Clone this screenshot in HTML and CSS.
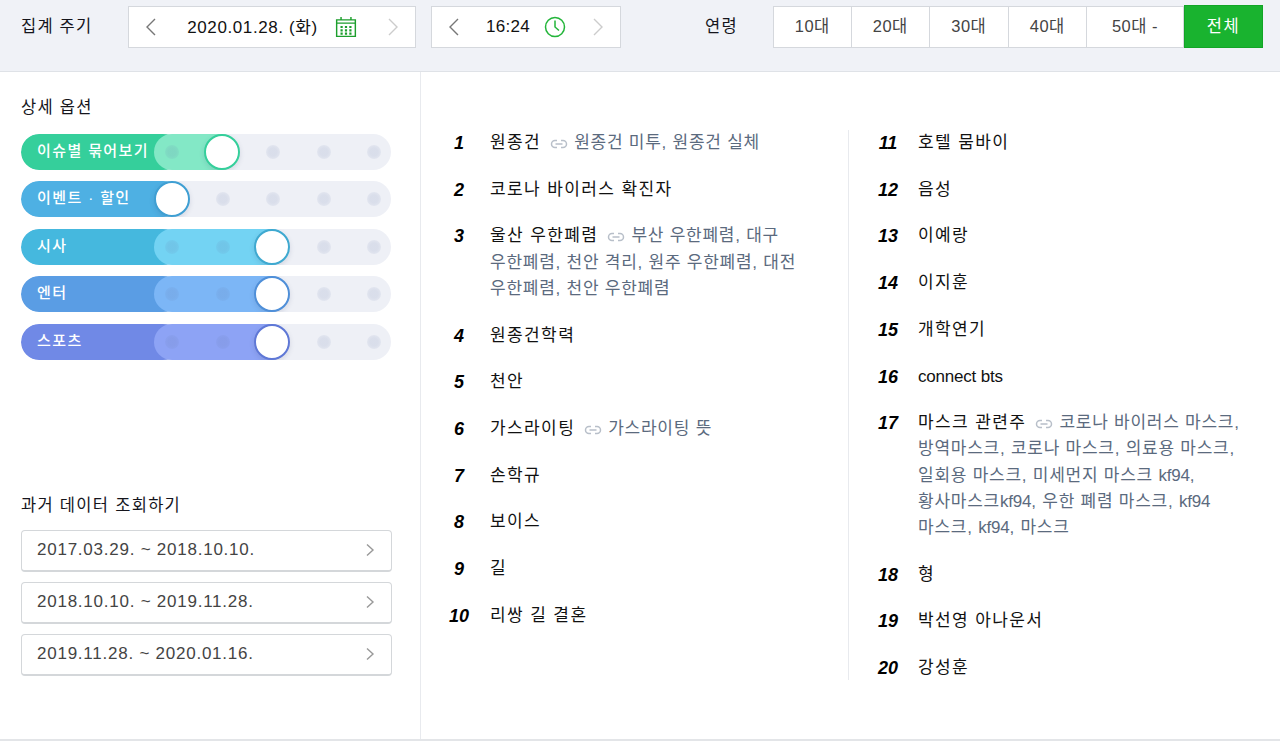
FILE: index.html
```html
<!DOCTYPE html>
<html lang="ko">
<head>
  <meta charset="UTF-8" />
  <meta name="viewport" content="width=device-width, initial-scale=1.0" />
  <title>급상승 검색어</title>
  <link rel="stylesheet" href="styles.css">
</head>
<body>
  <header class="topbar">
    <span class="top-label">집계 주기</span>
    <div class="stepper stepper-date">
      <svg class="arrow" viewBox="0 0 12 20"><path d="M10 2 2 10l8 8"/></svg>
      <div class="stepper-value">
        <span>2020.01.28. (화)</span>
        <svg class="pick-icon" viewBox="0 0 20 20">
          <path class="cal-line" d="M1.500 3.500h17v15h-17zM1.500 6.500h17M5.500 1v3M14.500 1v3"/>
          <path class="cal-dots" d="M5 9h2v2H5zM9 9h2v2H9zM13 9h2v2h-2zM5 12h2v2H5zM9 12h2v2H9zM13 12h2v2h-2zM5 15h2v2H5zM9 15h2v2H9zM13 15h2v2h-2z"/>
        </svg>
      </div>
      <svg class="arrow arrow-off" viewBox="0 0 12 20"><path d="M2 2l8 8-8 8"/></svg>
    </div>
    <div class="stepper stepper-time">
      <svg class="arrow" viewBox="0 0 12 20"><path d="M10 2 2 10l8 8"/></svg>
      <div class="stepper-value">
        <span>16:24</span>
        <svg class="pick-icon" viewBox="0 0 22 22">
          <circle class="clock-line" cx="11" cy="11" r="9.500"/>
          <path class="clock-line" d="M11 4.500V11l4 3.500"/>
        </svg>
      </div>
      <svg class="arrow arrow-off" viewBox="0 0 12 20"><path d="M2 2l8 8-8 8"/></svg>
    </div>
    <span class="top-label age-label">연령</span>
    <div class="age-tabs">
      <a class="age-tab">10대</a>
      <a class="age-tab">20대</a>
      <a class="age-tab">30대</a>
      <a class="age-tab">40대</a>
      <a class="age-tab age-wide">50대 -</a>
      <a class="age-tab age-on">전체</a>
    </div>
  </header>

  <div class="content">
    <aside class="side">
      <h3 class="side-title">상세 옵션</h3>
      <div class="toggles">
        <div class="toggle t-green level-1">
          <div class="fill"></div><div class="fill-light"></div>
          <div class="dots"><i></i><i></i><i></i><i></i><i></i></div>
          <span class="toggle-name">이슈별 묶어보기</span>
          <div class="thumb"></div>
        </div>
        <div class="toggle t-sky level-0">
          <div class="fill"></div>
          <div class="dots"><i></i><i></i><i></i><i></i><i></i></div>
          <span class="toggle-name">이벤트 · 할인</span>
          <div class="thumb"></div>
        </div>
        <div class="toggle t-cyan level-2">
          <div class="fill"></div><div class="fill-light"></div>
          <div class="dots"><i></i><i></i><i></i><i></i><i></i></div>
          <span class="toggle-name">시사</span>
          <div class="thumb"></div>
        </div>
        <div class="toggle t-blue level-2">
          <div class="fill"></div><div class="fill-light"></div>
          <div class="dots"><i></i><i></i><i></i><i></i><i></i></div>
          <span class="toggle-name">엔터</span>
          <div class="thumb"></div>
        </div>
        <div class="toggle t-violet level-2">
          <div class="fill"></div><div class="fill-light"></div>
          <div class="dots"><i></i><i></i><i></i><i></i><i></i></div>
          <span class="toggle-name">스포츠</span>
          <div class="thumb"></div>
        </div>
      </div>

      <h3 class="side-title past-title">과거 데이터 조회하기</h3>
      <div class="past-list">
        <a class="past-item">2017.03.29. ~ 2018.10.10.<svg class="arrow-small" viewBox="0 0 10 14"><path d="M2 1.500 8 7l-6 5.500"/></svg></a>
        <a class="past-item">2018.10.10. ~ 2019.11.28.<svg class="arrow-small" viewBox="0 0 10 14"><path d="M2 1.500 8 7l-6 5.500"/></svg></a>
        <a class="past-item">2019.11.28. ~ 2020.01.16.<svg class="arrow-small" viewBox="0 0 10 14"><path d="M2 1.500 8 7l-6 5.500"/></svg></a>
      </div>
    </aside>

    <main class="ranks">
      <ol class="rank-col rank-left">
        <li><b class="num">1</b><p><span class="word">원종건</span><svg class="link" viewBox="0 0 18 10"><path d="M7 1.500H5a3.500 3.500 0 0 0 0 7h2M11 1.500h2a3.500 3.500 0 0 1 0 7h-2M5.500 5h7"/></svg><span class="rel">원종건 미투, 원종건 실체</span></p></li>
        <li><b class="num">2</b><p><span class="word">코로나 바이러스 확진자</span></p></li>
        <li><b class="num">3</b><p><span class="word">울산 우한폐렴</span><svg class="link" viewBox="0 0 18 10"><path d="M7 1.500H5a3.500 3.500 0 0 0 0 7h2M11 1.500h2a3.500 3.500 0 0 1 0 7h-2M5.500 5h7"/></svg><span class="rel">부산 우한폐렴, 대구 우한폐렴, 천안 격리, 원주 우한폐렴, 대전 우한폐렴, 천안 우한폐렴</span></p></li>
        <li><b class="num">4</b><p><span class="word">원종건학력</span></p></li>
        <li><b class="num">5</b><p><span class="word">천안</span></p></li>
        <li><b class="num">6</b><p><span class="word">가스라이팅</span><svg class="link" viewBox="0 0 18 10"><path d="M7 1.500H5a3.500 3.500 0 0 0 0 7h2M11 1.500h2a3.500 3.500 0 0 1 0 7h-2M5.500 5h7"/></svg><span class="rel">가스라이팅 뜻</span></p></li>
        <li><b class="num">7</b><p><span class="word">손학규</span></p></li>
        <li><b class="num">8</b><p><span class="word">보이스</span></p></li>
        <li><b class="num">9</b><p><span class="word">길</span></p></li>
        <li><b class="num">10</b><p><span class="word">리쌍 길 결혼</span></p></li>
      </ol>
      <ol class="rank-col rank-right">
        <li><b class="num">11</b><p><span class="word">호텔 뭄바이</span></p></li>
        <li><b class="num">12</b><p><span class="word">음성</span></p></li>
        <li><b class="num">13</b><p><span class="word">이예랑</span></p></li>
        <li><b class="num">14</b><p><span class="word">이지훈</span></p></li>
        <li><b class="num">15</b><p><span class="word">개학연기</span></p></li>
        <li><b class="num">16</b><p><span class="word latin">connect bts</span></p></li>
        <li><b class="num">17</b><p><span class="word">마스크 관련주</span><svg class="link" viewBox="0 0 18 10"><path d="M7 1.500H5a3.500 3.500 0 0 0 0 7h2M11 1.500h2a3.500 3.500 0 0 1 0 7h-2M5.500 5h7"/></svg><span class="rel">코로나 바이러스 마스크, 방역마스크, 코로나 마스크, 의료용 마스크, 일회용 마스크, 미세먼지 마스크 <span class="latin">kf94</span>, 황사마스크<span class="latin">kf94</span>, 우한 폐렴 마스크, <span class="latin">kf94</span> 마스크, <span class="latin">kf94</span>, 마스크</span></p></li>
        <li><b class="num">18</b><p><span class="word">형</span></p></li>
        <li><b class="num">19</b><p><span class="word">박선영 아나운서</span></p></li>
        <li><b class="num">20</b><p><span class="word">강성훈</span></p></li>
      </ol>
    </main>
  </div>
</body>
</html>
```

FILE: styles.css
```css
* { box-sizing: border-box; margin: 0; padding: 0; }

body {
  font-family: "Liberation Sans", "Noto Sans CJK KR", sans-serif;
  font-size: 17px;
  color: #111;
  height: 741px;
  overflow: hidden;
  background: #fff;
  display: flex;
  flex-direction: column;
}

/* top bar */
.topbar {
  height: 72px;
  flex: none;
  display: flex;
  align-items: flex-start;
  padding: 6px 0 0 21px;
  background: #f0f2f7;
  border-bottom: 1px solid #dfe2e7;
}

.top-label {
  width: 107px;
  line-height: 40px;
  font-size: 16.500px;
  letter-spacing: 1.200px;
  color: #15151c;
}

.age-label {
  width: 68px;
  margin-left: 84px;
}

.stepper {
  height: 42px;
  display: flex;
  align-items: center;
  justify-content: space-between;
  padding: 0 16px;
  background: #fff;
  border: 1px solid #d5d8dd;
}

.stepper-date { width: 288px; margin-right: 15px; }
.stepper-time { width: 190px; }

.stepper-value {
  display: flex;
  align-items: center;
  gap: 17px;
}

.stepper-date .stepper-value span { letter-spacing: 0.600px; margin-bottom: 4px; }
.stepper-time .stepper-value { gap: 14px; }
.stepper-time .stepper-value span { letter-spacing: 0.300px; }

.arrow {
  width: 12px;
  height: 20px;
  fill: none;
  stroke: #777;
  stroke-width: 1.400;
}

.arrow-off { stroke: #ccc; }

.pick-icon { width: 22px; height: 22px; }

.cal-line { fill: none; stroke: #1c9e2c; stroke-width: 1.300; }
.cal-dots { fill: #1c9e2c; }
.clock-line { fill: none; stroke: #23b53a; stroke-width: 1.500; }

.age-tabs {
  display: flex;
  height: 42px;
}

.age-tab {
  width: 78.500px;
  display: flex;
  align-items: center;
  justify-content: center;
  padding-bottom: 4px;
  background: #fff;
  color: #444;
  font-size: 16.500px;
  letter-spacing: 0.500px;
  border: 1px solid #d5d8dd;
  border-left: 0;
}

.age-tab:first-child { border-left: 1px solid #d5d8dd; }
.age-wide { width: 97px; }

.age-on {
  width: 79px;
  margin-top: -1px;
  height: 43px;
  background: #19b32f;
  border: 1px solid #12a526;
  color: #fff;
  letter-spacing: 1.500px;
}

/* page body */
.content {
  flex: 1;
  display: flex;
  border-bottom: 2px solid #e3e5e8;
}

.side {
  width: 421px;
  flex: none;
  padding: 23px 28px 0 21px;
  border-right: 1px solid #e8eaee;
}

.side-title {
  font-size: 16.500px;
  font-weight: 400;
  line-height: 24px;
  letter-spacing: 1.300px;
  color: #15151c;
}

.toggles {
  margin-top: 15px;
  display: flex;
  flex-direction: column;
  gap: 11.400px;
}

.toggle {
  position: relative;
  height: 36px;
  width: 370px;
  border-radius: 18px;
  background: #eef0f6;
  overflow: hidden;
}

.fill, .fill-light, .dots, .thumb, .toggle-name { position: absolute; }

.fill {
  left: 0;
  top: 0;
  bottom: 0;
  width: 160px;
  border-radius: 18px;
}

.fill-light {
  left: 133px;
  top: 0;
  bottom: 0;
  border-radius: 18px;
}

.level-1 .fill-light { width: 85px; }
.level-2 .fill-light { width: 135px; }

.thumb {
  top: 0;
  width: 36px;
  height: 36px;
  border-radius: 50%;
  background: #fff;
  border: 2px solid #3aa;
  box-shadow: 0 2px 5px rgba(60, 70, 110, 0.15);
}

.level-0 .thumb { left: 133px; }
.level-1 .thumb { left: 183px; }
.level-2 .thumb { left: 233px; }

.dots {
  left: 144px;
  top: 11px;
  width: 216px;
  display: flex;
  justify-content: space-between;
}

.dots i {
  width: 14px;
  height: 14px;
  border-radius: 50%;
  background: radial-gradient(circle, rgba(100, 120, 170, 0.15) 40%, rgba(100, 120, 170, 0.03) 100%);
}

.toggle-name {
  left: 16px;
  top: 0;
  line-height: 33px;
  color: #fff;
  font-size: 15px;
  letter-spacing: 1.400px;
  font-weight: 500;
  white-space: nowrap;
}

.t-green .fill { background: #35cf9b; }
.t-green .fill-light { background: #83e8c6; }
.t-green .thumb { border-color: #35cf9b; }
.t-sky .fill { background: #4eb0e3; }
.t-sky .thumb { border-color: #3f9fd3; }
.t-cyan .fill { background: #45b8de; }
.t-cyan .fill-light { background: #73d3f3; }
.t-cyan .thumb { border-color: #3fa9d0; }
.t-blue .fill { background: #5a9de4; }
.t-blue .fill-light { background: #7cb6f6; }
.t-blue .thumb { border-color: #4f8fd8; }
.t-violet .fill { background: #7089e6; }
.t-violet .fill-light { background: #8da3f5; }
.t-violet .thumb { border-color: #5f78d6; }

.past-title { margin-top: 133px; }

.past-list {
  margin-top: 13px;
  display: flex;
  flex-direction: column;
  gap: 10px;
}

.past-item {
  height: 42px;
  display: flex;
  align-items: center;
  justify-content: space-between;
  padding: 0 16px 0 15px;
  color: #444;
  letter-spacing: 0.760px;
  border: 1px solid #d4d7da;
  border-bottom-width: 2px;
  border-radius: 4px;
}

.arrow-small {
  width: 10px;
  height: 14px;
  fill: none;
  stroke: #999;
  stroke-width: 1.400;
}

/* ranking lists */
.ranks {
  flex: 1;
  display: flex;
  align-items: flex-start;
  padding: 58px 0 0 20px;
}

.rank-col {
  list-style: none;
  display: flex;
  flex-direction: column;
  gap: 20.500px;
}

.rank-left {
  width: 408px;
  padding-right: 38px;
  height: 550px;
  border-right: 1px solid #e8eaee;
}

.rank-right {
  width: 396px;
  padding-left: 21px;
}

.rank-col li {
  display: flex;
  line-height: 26.200px;
}

.rank-col p {
  flex: 1;
  word-break: keep-all;
}

.num {
  width: 36px;
  margin-right: 13px;
  flex: none;
  text-align: center;
  font-size: 18px;
  font-style: italic;
  font-weight: 700;
  color: #000;
}

.rank-right .num { margin-right: 12px; }

.word { color: #111; letter-spacing: 1.400px; }
.rel { color: #5b6a7e; letter-spacing: 0.750px; }
.word.latin, .rel .latin { letter-spacing: -0.200px; }

.link {
  display: inline-block;
  width: 18px;
  height: 10px;
  margin: 0 6px 0 9px;
  fill: none;
  stroke: #b8bfc9;
  stroke-width: 1.500;
  vertical-align: -1px;
}
```
